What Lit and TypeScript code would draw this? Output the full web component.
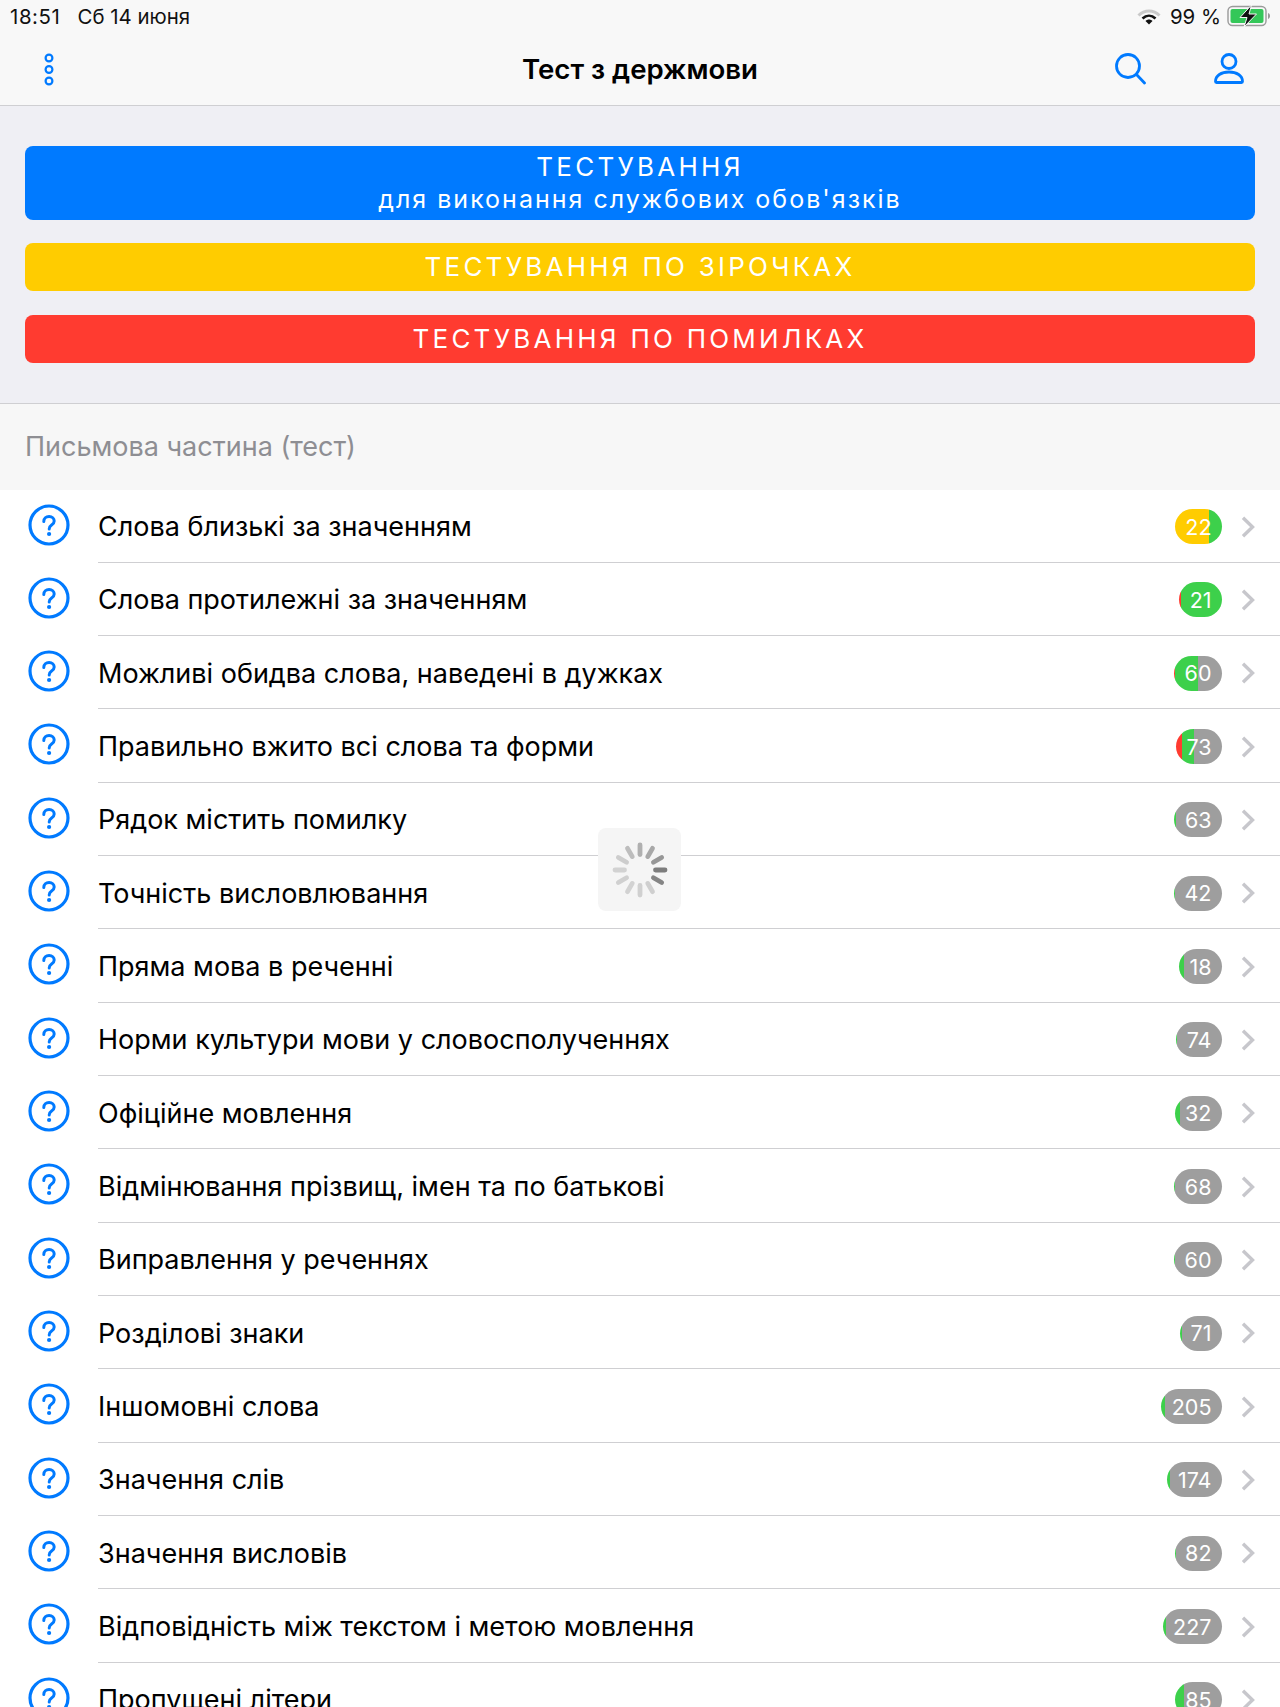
import { LitElement, html, css, svg } from "lit";
import { customElement } from "lit/decorators.js";

const Y = "#ffcc00", G = "#3dd04b", R = "#ff3b30", N = "#9e9e9e";
type Seg = [string, number];
interface Row { t: string; n: string; s: Seg[]; }
const rows: Row[] = [
  { t: "Слова близькі за значенням", n: "22", s: [[Y, 34], [G, 99]] },
  { t: "Слова протилежні за значенням", n: "21", s: [[R, 2], [G, 99]] },
  { t: "Можливі обидва слова, наведені в дужках", n: "60", s: [[R, 1.5], [G, 24], [N, 99]] },
  { t: "Правильно вжито всі слова та форми", n: "73", s: [[R, 6], [G, 18.5], [N, 99]] },
  { t: "Рядок містить помилку", n: "63", s: [[G, 2], [N, 99]] },
  { t: "Точність висловлювання", n: "42", s: [[G, 1], [N, 99]] },
  { t: "Пряма мова в реченні", n: "18", s: [[G, 5], [N, 99]] },
  { t: "Норми культури мови у словосполученнях", n: "74", s: [[G, 1.5], [N, 99]] },
  { t: "Офіційне мовлення", n: "32", s: [[G, 5], [N, 99]] },
  { t: "Відмінювання прізвищ, імен та по батькові", n: "68", s: [[G, 1.5], [N, 99]] },
  { t: "Виправлення у реченнях", n: "60", s: [[G, 1], [N, 99]] },
  { t: "Розділові знаки", n: "71", s: [[G, 1.5], [N, 99]] },
  { t: "Іншомовні слова", n: "205", s: [[G, 4], [N, 99]] },
  { t: "Значення слів", n: "174", s: [[G, 3], [N, 99]] },
  { t: "Значення висловів", n: "82", s: [[G, 1], [N, 99]] },
  { t: "Відповідність між текстом і метою мовлення", n: "227", s: [[G, 3], [N, 99]] },
  { t: "Пропущені літери", n: "85", s: [[G, 9], [N, 99]] },
];

function pillBg(s: Seg[]): string {
  let prev = 0;
  const stops = s.map(([c, x]) => {
    const r = `${c} ${prev}px ${x}px`;
    prev = x;
    return r;
  });
  return `background: linear-gradient(90deg, ${stops.join(", ")})`;
}

const spokes = [
  [0, "#b0b0b0"], [30, "#a8a8a8"], [60, "#979797"], [90, "#7d7d7d"], [120, "#858585"],
  [150, "#cfcfcf"], [180, "#d0d0d0"], [210, "#d2d2d2"], [240, "#d0d0d0"], [270, "#d2d2d2"],
  [300, "#cdcdcd"], [330, "#bdbdbd"],
] as const;

@customElement("app-root")
export class AppRoot extends LitElement {
  static styles = css`
    :host {
      display: block;
      position: relative;
      height: 1707px;
      overflow: hidden;
      background: #fff;
      font-family: Inter, "Liberation Sans", sans-serif;
      color: #000;
    }
    .top {
      background: #f8f8f8;
      border-bottom: 1px solid #cfcfd2;
      height: 105px;
      display: flex;
      flex-direction: column;
    }
    .status {
      height: 32px;
      display: flex;
      align-items: center;
      padding: 0 9px 0 10px;
      font-size: 20.4px;
      color: #111;
    }
    .status .time { letter-spacing: 0.6px; }
    .status .date { margin-left: 17px; }
    .spacer { flex: 1; }
    .status .pct { margin: 0 6px 0 9px; }
    .nav {
      flex: 1;
      display: grid;
      grid-template-columns: 1fr auto 1fr;
      align-items: center;
    }
    .nav .left { padding-left: 43px; display: flex; }
    .nav h1 {
      margin: 0;
      font-size: 27.6px;
      font-weight: 600;
    }
    .nav .right { display: flex; justify-content: flex-end; gap: 68px; align-items: center; padding-right: 36px; }
    .actions {
      background: #efeff4;
      border-bottom: 1px solid #cfcfd2;
      height: 297px;
      padding: 0 25px;
      display: flex;
      flex-direction: column;
      gap: 23.5px;
    }
    .btn {
      border-radius: 8px;
      color: #fff;
      font-size: 26px;
      letter-spacing: 3.25px;
      text-align: center;
      line-height: 32px;
      height: 48px;
      display: flex;
      flex-direction: column;
      align-items: center;
      justify-content: center;
    }
    .btn .sub { font-size: 25px; letter-spacing: 2px; }
    .btn.blue { background: #007aff; height: 73.5px; margin-top: 40px; }
    .btn.yellow { background: #ffcc00; }
    .btn.red { background: #ff3b30; }
    .section {
      background: #f7f7f7;
      height: 85.5px;
      display: flex;
      align-items: center;
      padding: 0 25px;
      color: #8e8e93;
      font-size: 27px;
    }
    .row {
      display: flex;
      height: 73.33px;
      box-sizing: border-box;
    }
    .ic {
      width: 98px;
      flex: none;
      display: flex;
      padding: 14px 0 0 28px;
      box-sizing: border-box;
    }
    .body {
      flex: 1;
      display: flex;
      align-items: center;
      border-bottom: 1px solid #cfcfd2;
      padding: 2px 25px 0 0;
    }
    .label { flex: 1; font-size: 27px; white-space: nowrap; }
    .pill {
      height: 35px;
      border-radius: 18px;
      padding: 0 10.500px;
      display: flex;
      align-items: center;
      color: #fff;
      font-size: 21.500px;
      overflow: hidden;
    }
    .chev { margin-left: 19px; display: block; }
    .spinner {
      position: absolute;
      left: 598px;
      top: 828px;
      width: 83px;
      height: 83px;
      border-radius: 8px;
      background: #f5f5f5;
      display: flex;
      align-items: center;
      justify-content: center;
    }
    svg { display: block; }
  `;

  render() {
    return html`
      <div class="top">
        <div class="status">
          <span class="time">18:51</span><span class="date">Сб 14 июня</span>
          <span class="spacer"></span>
          <svg width="24" height="17" viewBox="0 0 24 17">
            <path d="M1.500 7.500C7.500 1.500 16.500 1.500 22.500 7.500" fill="none" stroke="#c9c9c9" stroke-width="3"/>
            <path d="M5.500 10.500C9.500 6.800 14.500 6.800 18.500 10.500" fill="none" stroke="#111" stroke-width="2.600"/>
            <path d="M8.500 13C10.500 11 13.500 11 15.500 13L12 16.500Z" fill="#111"/>
          </svg>
          <span class="pct">99 %</span>
          <svg width="44" height="22" viewBox="0 0 44 22">
            <rect x="1" y="1.500" width="38" height="19" rx="4.500" fill="none" stroke="#9a9a9a" stroke-width="1.400"/>
            <rect x="3.500" y="4" width="33" height="14" rx="2" fill="#34c759"/>
            <path d="M41 8v6c1.400-.4 2-1.600 2-3s-.6-2.600-2-3Z" fill="#9a9a9a"/>
            <path d="M24.500 0 13 12.500h7L17 22 29.500 9h-7.500Z" fill="#111" stroke="#f8f8f8" stroke-width="1"/>
          </svg>
        </div>
        <div class="nav">
          <div class="left">
            <svg width="12" height="34" viewBox="0 0 12 34" fill="none" stroke="#007aff" stroke-width="2.200">
              <circle cx="6" cy="6" r="3.400"/><circle cx="6" cy="17.500" r="3.400"/><circle cx="6" cy="29" r="3.400"/>
            </svg>
          </div>
          <h1>Тест з держмови</h1>
          <div class="right">
            <svg width="31" height="32" viewBox="0 0 31 32" fill="none" stroke="#007aff" stroke-width="2.800" stroke-linecap="round">
              <circle cx="13" cy="13" r="11.500"/><path d="M21.500 21.500 29.500 30"/>
            </svg>
            <svg width="30" height="31" viewBox="0 0 30 31" fill="none" stroke="#007aff" stroke-width="2.800" stroke-linejoin="round">
              <circle cx="15" cy="8.500" r="7"/>
              <path d="M1.500 28.500c0-6 5.800-9.500 13.500-9.500s13.500 3.500 13.500 9.500c0 .6-.4 1-1 1H2.500c-.6 0-1-.4-1-1Z"/>
            </svg>
          </div>
        </div>
      </div>
      <div class="actions">
        <div class="btn blue"><span>ТЕСТУВАННЯ</span><span class="sub">для виконання службових обов'язків</span></div>
        <div class="btn yellow">ТЕСТУВАННЯ ПО ЗІРОЧКАХ</div>
        <div class="btn red">ТЕСТУВАННЯ ПО ПОМИЛКАХ</div>
      </div>
      <div class="section">Письмова частина (тест)</div>
      ${rows.map(
        (r) => html`
          <div class="row">
            <div class="ic">
              <svg width="42" height="42" viewBox="0 0 42 42" fill="none">
                <circle cx="21" cy="21" r="19" stroke="#007aff" stroke-width="3.200"/>
                <path d="M15.800 17.500c0-3.100 2.200-4.900 5.300-4.900 3 0 5.100 1.800 5.100 4.400 0 1.900-1 2.900-2.600 4-1.800 1.200-2.400 1.900-2.400 3.900" stroke="#007aff" stroke-width="3" stroke-linecap="round"/>
                <circle cx="21.100" cy="30" r="2.100" fill="#007aff"/>
              </svg>
            </div>
            <div class="body">
              <span class="label">${r.t}</span>
              <span class="pill" style=${pillBg(r.s)}>${r.n}</span>
              <svg class="chev" width="14" height="22" viewBox="0 0 14 22" fill="none" stroke="#c7c7cc" stroke-width="3.400">
                <path d="M2 1.800 11.500 11 2 20.200"/>
              </svg>
            </div>
          </div>
        `
      )}
      <div class="spinner">
        <svg width="56" height="56" viewBox="0 0 56 56" fill="none" stroke-width="4.800" stroke-linecap="round">
          ${spokes.map(
            ([a, c]) => svg`<line x1="28" y1="3" x2="28" y2="12.500" stroke=${c} transform="rotate(${a} 28 28)"/>`
          )}
        </svg>
      </div>
    `;
  }
}
